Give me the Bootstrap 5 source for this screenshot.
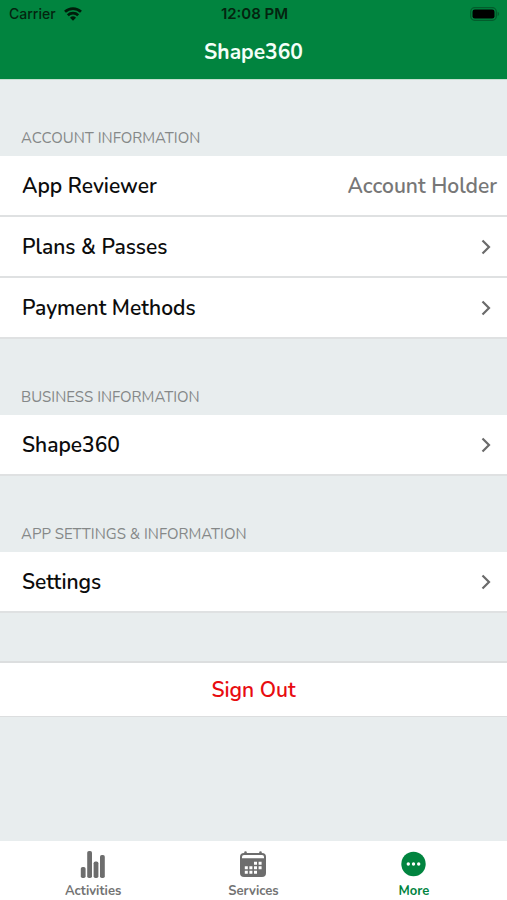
<!DOCTYPE html>
<html lang="en">
<head>
<meta charset="utf-8">
<meta name="viewport" content="width=device-width, initial-scale=1">
<title>Shape360</title>
<link href="https://cdn.jsdelivr.net/npm/bootstrap@5.3.0/dist/css/bootstrap.min.css" rel="stylesheet">
<style>
  body { font-family: Nunito, Lato, "Open Sans", sans-serif; background: #e8edee; color: #0c0c0c; }
  .app-header { background: #01843f; height: 80px; border-bottom: 1px solid #c4e0d0; }
  .status-bar { font: 500 14px/28px Inter, "Liberation Sans", sans-serif; color: #04240f; padding: 0 7px 0 9px; }
  .status-time { font-size: 15px; font-weight: 600; }
  .app-title { font-size: 21px; line-height: 48px; font-weight: 700; color: #f4fff8; }
  .section-label { font-size: 15px; line-height: 20px; height: 76px; padding: 0 21px 8px; color: #858888; font-weight: 400; }
  .menu-row { height: 61px; padding: 0 10px 0 22px; font-size: 21px; line-height: 30px; font-weight: 600; color: #0c0c0c; border-bottom: 2px solid #dfe1e2; }
  .menu-row .chevron { margin-right: 6px; }
  .role { color: #777; }
  .sign-out { margin-top: 48px; height: 56px; font-size: 21px; line-height: 30px; font-weight: 600; color: #e80c10; border: solid #dcdedf; border-width: 2px 0 1px; }
  .tab-bar { height: 59px; padding: 0 13px; }
  .tab-link { font-size: 13px; line-height: 18px; font-weight: 700; color: #737373; padding-top: 9px; gap: 4px; }
  .tab-link.active { color: #01843f; }
</style>
</head>
<body class="d-flex flex-column min-vh-100">
<header class="app-header">
  <div class="status-bar row g-0 align-items-center">
    <div class="col d-flex align-items-center gap-2">
      <span>Carrier</span>
      <svg width="18" height="14" viewBox="0 0 18 14" fill="none" stroke="#001c0a" stroke-width="2.7" aria-hidden="true"><path d="M1 4.8a11.6 11.6 0 0 1 16 0M3.8 8.2a7.6 7.6 0 0 1 10.4 0"/><path d="M9 13.7 6 10.7a4.4 4.4 0 0 1 6 0Z" fill="#001c0a" stroke="none"/></svg>
    </div>
    <div class="col-auto status-time">12:08 PM</div>
    <div class="col d-flex justify-content-end">
      <svg width="30" height="14" viewBox="0 0 30 14" aria-hidden="true"><rect x=".7" y=".7" width="25.6" height="12.6" rx="4" fill="none" stroke="#035c2c" stroke-width="1.3"/><rect x="2.5" y="2.5" width="22" height="9" rx="2.3"/><path d="M27.6 4.8a2.4 2.4 0 0 1 0 4.4Z" fill="#035c2c"/></svg>
    </div>
  </div>
  <h1 class="app-title text-center m-0">Shape360</h1>
</header>

<main class="flex-grow-1">
  <section>
    <h2 class="section-label d-flex align-items-end m-0">ACCOUNT INFORMATION</h2>
    <div class="menu-row bg-white d-flex align-items-center justify-content-between"><span>App Reviewer</span><span class="role">Account Holder</span></div>
    <a href="#plans" class="menu-row bg-white d-flex align-items-center justify-content-between text-decoration-none">Plans &amp; Passes
      <svg class="chevron" width="10" height="16" viewBox="0 0 10 16" fill="none" stroke="#6b6b6b" stroke-width="2.2" aria-hidden="true"><path d="m1.5 1.5 6.5 6.5-6.5 6.5"/></svg></a>
    <a href="#payment" class="menu-row bg-white d-flex align-items-center justify-content-between text-decoration-none">Payment Methods
      <svg class="chevron" width="10" height="16" viewBox="0 0 10 16" fill="none" stroke="#6b6b6b" stroke-width="2.2" aria-hidden="true"><path d="m1.5 1.5 6.5 6.5-6.5 6.5"/></svg></a>
  </section>
  <section>
    <h2 class="section-label d-flex align-items-end m-0">BUSINESS INFORMATION</h2>
    <a href="#business" class="menu-row bg-white d-flex align-items-center justify-content-between text-decoration-none">Shape360
      <svg class="chevron" width="10" height="16" viewBox="0 0 10 16" fill="none" stroke="#6b6b6b" stroke-width="2.2" aria-hidden="true"><path d="m1.5 1.5 6.5 6.5-6.5 6.5"/></svg></a>
  </section>
  <section>
    <h2 class="section-label d-flex align-items-end m-0">APP SETTINGS &amp; INFORMATION</h2>
    <a href="#settings" class="menu-row bg-white d-flex align-items-center justify-content-between text-decoration-none">Settings
      <svg class="chevron" width="10" height="16" viewBox="0 0 10 16" fill="none" stroke="#6b6b6b" stroke-width="2.2" aria-hidden="true"><path d="m1.5 1.5 6.5 6.5-6.5 6.5"/></svg></a>
  </section>
  <button type="button" class="sign-out d-block w-100 bg-white p-0">Sign Out</button>
</main>

<nav class="tab-bar bg-white d-flex" aria-label="Main">
  <a href="#activities" class="tab-link col d-flex flex-column align-items-center text-decoration-none">
    <svg width="26" height="28" viewBox="0 0 26 28" fill="#6d6d6d" aria-hidden="true"><rect x="0.8" y="17" width="4.8" height="11" rx="1.8"/><rect x="7.2" y="1" width="4.8" height="27" rx="1.8"/><rect x="13.6" y="11.5" width="4.8" height="16.5" rx="1.8"/><rect x="20" y="5" width="4.8" height="23" rx="1.8"/></svg>
    Activities</a>
  <a href="#services" class="tab-link col d-flex flex-column align-items-center text-decoration-none">
    <svg width="28" height="28" viewBox="0 0 28 28" aria-hidden="true"><rect x="1" y="3" width="26" height="24" rx="4" fill="#6d6d6d"/><path d="M6.5 2.6v2M21.5 2.6v2" stroke="#6d6d6d" stroke-width="2.6" stroke-linecap="round"/><path d="M3 8.2V6.8Q3 5 5 5H23Q25 5 25 6.8V8.2Z" fill="#fff"/><path d="M15 11.8h3v3h-3zm4.6 0h3v3h-3zM5.8 16.3h3v3h-3zm4.6 0h3v3h-3zm4.6 0h3v3h-3zm4.6 0h3v3h-3zM5.8 20.8h3v3h-3zm4.6 0h3v3h-3zm4.6 0h3v3h-3z" fill="#fff"/></svg>
    Services</a>
  <a href="#more" class="tab-link active col d-flex flex-column align-items-center text-decoration-none" aria-current="page">
    <svg width="28" height="28" viewBox="0 0 28 28" aria-hidden="true"><circle cx="13.5" cy="14" r="12.2" fill="#01843f"/><g fill="#fff"><circle cx="8.3" cy="14" r="1.7"/><circle cx="13.5" cy="14" r="1.7"/><circle cx="18.7" cy="14" r="1.7"/></g></svg>
    More</a>
</nav>
<script src="https://cdn.jsdelivr.net/npm/bootstrap@5.3.0/dist/js/bootstrap.bundle.min.js"></script>
</body>
</html>
